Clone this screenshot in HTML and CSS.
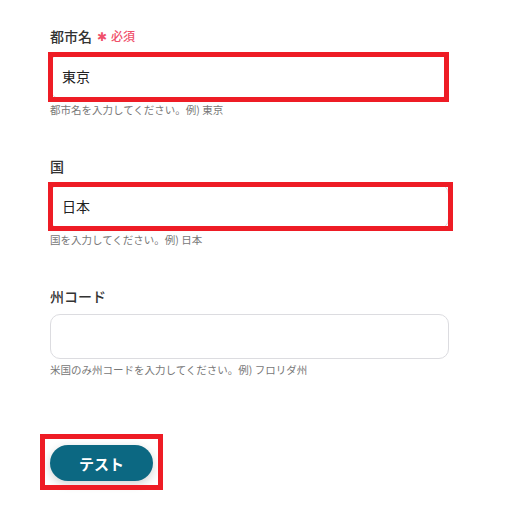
FILE: index.html
```html
<!DOCTYPE html>
<html lang="ja">
<head>
<meta charset="utf-8">
<link rel="stylesheet" href="styles.css">
</head>
<body>
<form class="form">
  <div class="field">
    <label class="label">都市名<span class="req"><span class="star">&#x2731;</span>必須</span></label>
    <div class="input-wrap">
      <div class="input">東京</div>
      <div class="mark mark-1"></div>
    </div>
    <p class="hint">都市名を入力してください。例) 東京</p>
  </div>
  <div class="field">
    <label class="label">国</label>
    <div class="input-wrap">
      <div class="input">日本</div>
      <div class="mark mark-2"></div>
    </div>
    <p class="hint">国を入力してください。例) 日本</p>
  </div>
  <div class="field">
    <label class="label">州コード</label>
    <div class="input-wrap">
      <div class="input"></div>
    </div>
    <p class="hint">米国のみ州コードを入力してください。例) フロリダ州</p>
  </div>
  <div class="actions">
    <div class="btn-wrap">
      <button type="button" class="btn">テスト</button>
      <div class="mark mark-btn"></div>
    </div>
  </div>
</form>
</body>
</html>
```

FILE: styles.css
```css
* { box-sizing: border-box; }
html, body { margin: 0; padding: 0; background: #fff; }
body {
  font-family: "Noto Sans CJK JP", "Noto Sans", sans-serif;
  color: #333;
  min-height: 510px;
}
.form {
  width: 399px;
  margin-left: 50px;
  padding-top: 26px;
  padding-bottom: 24px;
  display: flex;
  flex-direction: column;
  gap: 38px;
}
.field { display: flex; flex-direction: column; }
.label {
  font-size: 14px;
  line-height: 20px;
  height: 20px;
  font-weight: 500;
  color: #333;
  display: flex;
  align-items: center;
}
.req {
  display: inline-flex;
  align-items: center;
  margin-left: 5px;
  color: #f0506a;
  font-size: 12px;
  font-weight: 500;
}
.star { font-size: 12px; line-height: 12px; margin-right: 4px; }
.input-wrap { position: relative; margin-top: 8px; }
.input {
  height: 45px;
  border: 1px solid #dcdce0;
  border-radius: 10px;
  padding: 0 11px;
  font-size: 14px;
  line-height: 43px;
  color: #222;
  background: #fff;
}
.hint {
  margin: 3px 0 0;
  font-size: 10.5px;
  line-height: 16px;
  color: #777;
}
.mark {
  position: absolute;
  border: 5px solid #ee1c25;
  pointer-events: none;
}
.mark-1 { top: -2px; bottom: -3px; left: -2px; right: 0; }
.mark-2 { top: -2px; bottom: -2px; left: -2px; right: -4px; }
.actions { margin-top: 29px; }
.btn-wrap { position: relative; display: inline-block; vertical-align: top; }
.btn {
  display: block;
  width: 103px;
  height: 36px;
  border: none;
  border-radius: 18px;
  background: #0c6882;
  color: #fff;
  font-family: "Noto Sans CJK JP", "Noto Sans", sans-serif;
  font-size: 15px;
  font-weight: 700;
  box-shadow: 0 3px 10px rgba(0, 0, 0, 0.18);
}
.mark-btn { top: -11px; bottom: -9px; left: -10px; right: -10px; }
```
